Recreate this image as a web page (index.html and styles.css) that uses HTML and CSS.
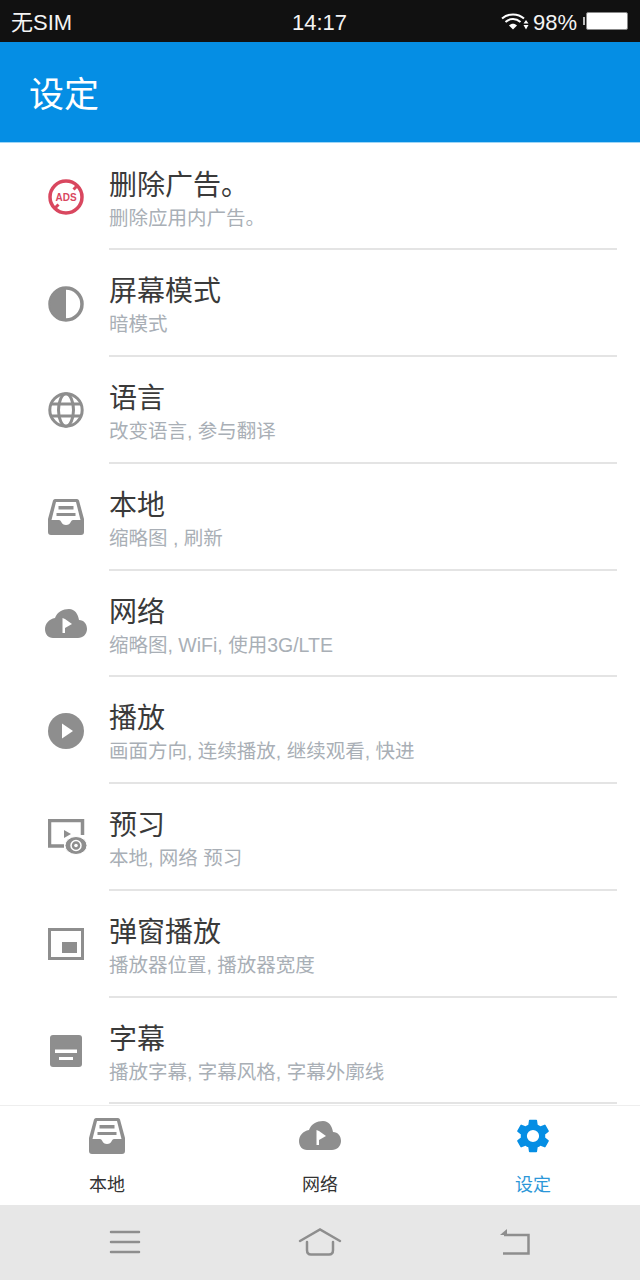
FILE: index.html
```html
<!DOCTYPE html>
<html lang="zh-CN">
<head>
  <meta charset="UTF-8">
  <title>设定</title>
  <link rel="stylesheet" href="styles.css">
</head>
<body>
  <svg class="defs" width="0" height="0">
    <symbol id="i-inbox" viewBox="0 0 36 36">
      <path fill-rule="evenodd" d="M7 0H29Q30.500 0 31 1.500L36 20V33Q36 36 33 36H3Q0 36 0 33V20L5 1.500Q5.500 0 7 0ZM8 3 3.500 21H11Q12.500 21 13 22.500 14.500 26 18 26 21.500 26 23 22.500 23.500 21 25 21H32.500L28 3ZM10.500 7H25.500V10.500H10.500ZM8.500 14H27.500V17H8.500Z"/>
    </symbol>
    <symbol id="i-cloud" viewBox="0 0 42 30">
      <path fill-rule="evenodd" d="M24 0C30 0 33 5 34 11 39 11 42 15 42 20 42 25 38 29 33 29H8C3 29 0 25 0 20 0 15 4 10 10 9 12 3 18 0 24 0ZM17.500 9V24H20V19L27 15 20 10Z"/>
    </symbol>
  </svg>

  <div class="status-bar">
    <span class="carrier">无SIM</span>
    <span class="clock">14:17</span>
    <div class="status-right">
      <svg class="wifi" width="28" height="18" viewBox="0 0 28 18">
        <path d="M1 6.500C7 1 17 1 23 6.500" fill="none" stroke="#fff" stroke-width="2"/>
        <path d="M4.500 10C9 6 15 6 19.500 10" fill="none" stroke="#fff" stroke-width="2"/>
        <path d="M8 13.500C10.500 11 13.500 11 16 13.500L12 17.500Z" fill="#fff"/>
        <path d="M25 8 27.500 11.500H22.500ZM25 17.500 22.500 13H27.500Z" fill="#fff"/>
      </svg>
      <span class="percent">98%</span>
      <span class="battery-tip"></span>
      <span class="battery"></span>
    </div>
  </div>

  <header class="app-bar">设定</header>

  <main class="settings">
    <div class="row">
      <div class="row-icon">
        <svg width="36" height="36" viewBox="0 0 36 36">
          <circle cx="18" cy="18" r="16" fill="none" stroke="#d9475f" stroke-width="3.500"/>
          <path d="M30 6 25.500 10.500M6 30 10.500 25.500" stroke="#d9475f" stroke-width="3"/>
          <text x="18" y="22" class="ads-text">ADS</text>
        </svg>
      </div>
      <div class="row-text">
        <div class="row-title">删除广告。</div>
        <div class="row-sub">删除应用内广告。</div>
      </div>
    </div>
    <div class="row">
      <div class="row-icon">
        <svg width="36" height="36" viewBox="0 0 36 36">
          <circle cx="18" cy="18" r="16" fill="#fff" stroke="#8e8e8e" stroke-width="3.500"/>
          <path d="M18 2A16 16 0 0 0 18 34Z" fill="#8e8e8e"/>
        </svg>
      </div>
      <div class="row-text">
        <div class="row-title">屏幕模式</div>
        <div class="row-sub">暗模式</div>
      </div>
    </div>
    <div class="row">
      <div class="row-icon">
        <svg width="36" height="36" viewBox="0 0 36 36" fill="none" stroke="#8e8e8e" stroke-width="3">
          <circle cx="18" cy="18" r="16.200"/>
          <ellipse cx="18" cy="18" rx="7.500" ry="16.200"/>
          <path d="M3.500 12H32.500M3.500 24H32.500"/>
        </svg>
      </div>
      <div class="row-text">
        <div class="row-title">语言</div>
        <div class="row-sub">改变语言, 参与翻译</div>
      </div>
    </div>
    <div class="row">
      <div class="row-icon">
        <svg width="36" height="36"><use href="#i-inbox" fill="#8e8e8e"/></svg>
      </div>
      <div class="row-text">
        <div class="row-title">本地</div>
        <div class="row-sub">缩略图 , 刷新</div>
      </div>
    </div>
    <div class="row">
      <div class="row-icon">
        <svg width="42" height="30"><use href="#i-cloud" fill="#8e8e8e"/></svg>
      </div>
      <div class="row-text">
        <div class="row-title">网络</div>
        <div class="row-sub">缩略图, WiFi, 使用3G/LTE</div>
      </div>
    </div>
    <div class="row">
      <div class="row-icon">
        <svg width="36" height="36" viewBox="0 0 36 36">
          <circle cx="18" cy="18" r="18" fill="#8e8e8e"/>
          <path d="M14 10.500 25 18 14 25.500Z" fill="#fff"/>
        </svg>
      </div>
      <div class="row-text">
        <div class="row-title">播放</div>
        <div class="row-sub">画面方向, 连续播放, 继续观看, 快进</div>
      </div>
    </div>
    <div class="row">
      <div class="row-icon">
        <svg class="icon-wide" width="40" height="36" viewBox="0 0 40 36">
          <path d="M16 27H1.500V1.500H34.500V16" fill="none" stroke="#8e8e8e" stroke-width="3.500"/>
          <path d="M16 11 23 15 16 19Z" fill="#8e8e8e"/>
          <ellipse cx="28" cy="26.500" rx="11" ry="9" fill="#8e8e8e" stroke="#fff" stroke-width="1"/>
          <circle cx="28" cy="26.500" r="5" fill="none" stroke="#fff" stroke-width="1.500"/>
          <circle cx="28" cy="26.500" r="1.800" fill="#fff"/>
        </svg>
      </div>
      <div class="row-text">
        <div class="row-title">预习</div>
        <div class="row-sub">本地, 网络 预习</div>
      </div>
    </div>
    <div class="row">
      <div class="row-icon">
        <svg width="36" height="32" viewBox="0 0 36 32">
          <rect x="1.500" y="1.500" width="33" height="29" fill="none" stroke="#8e8e8e" stroke-width="3"/>
          <rect x="14" y="14" width="15" height="11" fill="#8e8e8e"/>
        </svg>
      </div>
      <div class="row-text">
        <div class="row-title">弹窗播放</div>
        <div class="row-sub">播放器位置, 播放器宽度</div>
      </div>
    </div>
    <div class="row">
      <div class="row-icon">
        <svg width="32" height="32" viewBox="0 0 32 32">
          <rect width="32" height="32" rx="3" fill="#8e8e8e"/>
          <path d="M5 14.500H27V18H5ZM9 22H23V25H9Z" fill="#fff"/>
        </svg>
      </div>
      <div class="row-text">
        <div class="row-title">字幕</div>
        <div class="row-sub">播放字幕, 字幕风格, 字幕外廓线</div>
      </div>
    </div>
  </main>

  <nav class="tabs">
    <div class="tab">
      <div class="tab-icon"><svg width="36" height="36"><use href="#i-inbox" fill="#8e8e8e"/></svg></div>
      <span>本地</span>
    </div>
    <div class="tab">
      <div class="tab-icon"><svg width="42" height="30"><use href="#i-cloud" fill="#8e8e8e"/></svg></div>
      <span>网络</span>
    </div>
    <div class="tab active">
      <div class="tab-icon">
        <svg width="34" height="34" viewBox="2 2 20 20">
          <path fill="#058ee4" d="M19.140 12.940c.040-.3.060-.61.060-.94s-.020-.64-.070-.94l2.030-1.580a.49.490 0 0 0 .120-.61l-1.920-3.320a.49.490 0 0 0-.59-.22l-2.390.96c-.5-.38-1.030-.7-1.620-.94l-.36-2.540a.48.480 0 0 0-.48-.41h-3.840a.48.480 0 0 0-.47.410l-.36 2.540c-.59.240-1.130.57-1.620.94l-2.390-.96a.49.490 0 0 0-.59.220L2.740 8.870a.48.480 0 0 0 .120.61l2.030 1.580c-.050.3-.090.63-.090.94s.020.640.070.940l-2.030 1.580a.49.490 0 0 0-.12.610l1.920 3.320c.12.220.37.29.59.220l2.390-.96c.5.380 1.030.7 1.620.94l.36 2.540c.050.240.24.41.48.410h3.840c.24 0 .44-.17.470-.41l.36-2.540c.59-.24 1.130-.56 1.620-.94l2.390.96c.22.080.47 0 .59-.22l1.920-3.320a.48.480 0 0 0-.12-.61l-2.010-1.580zM12 15.600a3.600 3.600 0 1 1 0-7.200 3.600 3.600 0 0 1 0 7.200z"/>
        </svg>
      </div>
      <span>设定</span>
    </div>
  </nav>

  <div class="sys-nav">
    <svg width="32" height="26" viewBox="0 0 32 26" fill="none" stroke="#8e8e8e" stroke-width="2.500" stroke-linecap="round">
      <path d="M2 3H30M2 13H30M2 23H30"/>
    </svg>
    <svg width="44" height="28" viewBox="0 0 44 28" fill="none" stroke="#8e8e8e" stroke-width="2.500" stroke-linecap="round">
      <path d="M2 13 22 1.500 42 13"/>
      <path d="M9 14V22Q9 26.500 13 26.500H31Q35 26.500 35 22V14"/>
    </svg>
    <svg width="30" height="26" viewBox="0 0 30 26" fill="none" stroke="#8e8e8e" stroke-width="2.500">
      <path d="M4 6H28.500V24.500H3"/>
      <path d="M7 0 0 6H7Z" fill="#8e8e8e" stroke="none"/>
    </svg>
  </div>
</body>
</html>
```

FILE: styles.css
```css
html, body {
  margin: 0;
  padding: 0;
}
body {
  width: 640px;
  height: 1280px;
  display: flex;
  flex-direction: column;
  overflow: hidden;
  background: #fff;
  font-family: "Liberation Sans", "Noto Sans CJK SC", sans-serif;
}
.defs {
  position: absolute;
}

.status-bar {
  height: 42px;
  flex: none;
  background: #111;
  color: #f4f4f4;
  display: grid;
  grid-template-columns: 1fr auto 1fr;
  align-items: center;
  padding: 0 12px 0 11px;
  font-size: 22px;
}
.carrier {
  padding-bottom: 2px;
}
.clock, .percent {
  padding-top: 4px;
}
.status-right {
  display: flex;
  align-items: center;
  justify-content: flex-end;
}
.wifi {
  margin-right: 4px;
}
.percent {
  margin-right: 6px;
}
.battery-tip {
  width: 2px;
  height: 8px;
  background: #bbb;
}
.battery {
  width: 40px;
  height: 16px;
  margin-left: 1px;
  background: #fff;
  border: 1px solid #888;
  border-radius: 2px;
}

.app-bar {
  height: 101px;
  flex: none;
  box-sizing: border-box;
  padding: 0 29px 2px;
  display: flex;
  align-items: center;
  background: #058ee4;
  border-bottom: 1px solid #9fd6f6;
  color: #fff;
  font-size: 35px;
}

.settings {
  height: 962px;
  flex: none;
  overflow: hidden;
  padding-top: 0.500px;
  box-sizing: border-box;
}
.row {
  height: 106.750px;
  display: flex;
  box-sizing: border-box;
}
.row-icon {
  width: 36px;
  flex: none;
  margin: 0 25px 0 48px;
  display: flex;
  align-items: center;
  justify-content: center;
}
.row-icon svg {
  flex: none;
}
.row-icon .icon-wide {
  margin-left: 4px;
}
.row-text {
  width: 508px;
  flex: none;
  box-sizing: border-box;
  border-bottom: 2px solid #e4e4e4;
  padding-top: 23px;
}
.row-title {
  font-size: 28px;
  line-height: 38px;
  color: #3a3a3a;
}
.row-sub {
  font-size: 19.500px;
  line-height: 26px;
  color: #a9afb6;
}
.ads-text {
  font-size: 10px;
  font-weight: bold;
  text-anchor: middle;
  fill: #d9475f;
}

.tabs {
  height: 100px;
  flex: none;
  box-sizing: border-box;
  display: grid;
  grid-template-columns: 214px 212px 214px;
  border-top: 1px solid #eee;
  background: #fff;
}
.tab {
  display: flex;
  flex-direction: column;
  align-items: center;
  font-size: 18px;
  color: #333;
}
.tab-icon {
  height: 36px;
  margin-top: 12px;
  margin-bottom: 16px;
  display: flex;
  align-items: center;
  justify-content: center;
}
.tab.active {
  color: #2c97d8;
}

.sys-nav {
  flex: 1;
  background: #e7e7e7;
  display: grid;
  grid-template-columns: 250px 140px 250px;
  align-items: center;
  justify-items: center;
  padding-bottom: 1px;
}
```
